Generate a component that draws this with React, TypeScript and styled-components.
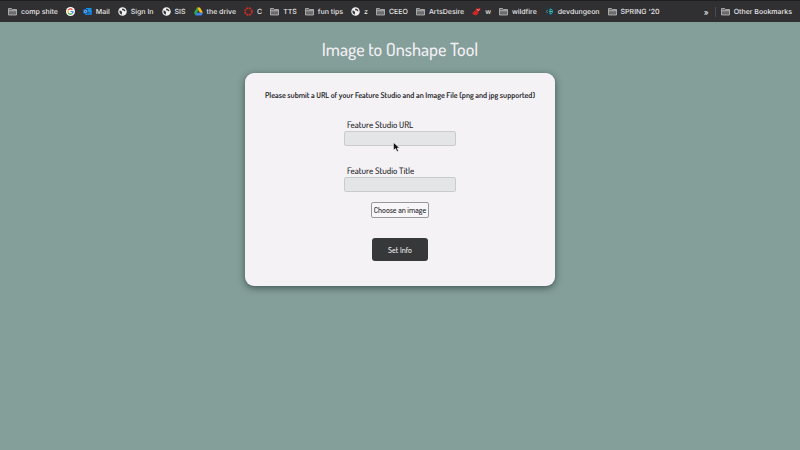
import React from "react";
import styled, { createGlobalStyle } from "styled-components";

const GlobalStyle = createGlobalStyle`
  *, *::before, *::after { box-sizing: border-box; }
  body {
    margin: 0;
    background: #849e99;
    font-family: Dosis, "Liberation Sans Narrow", "Open Sans", sans-serif;
    font-weight: 500;
    text-rendering: geometricPrecision;
    color: #222225;
  }
`;

const BookmarksBar = styled.nav`
  display: flex;
  align-items: center;
  height: 22px;
  padding: 0 8px;
  background: #302f31;
  border-top: 1px solid #1f1e20;
  font-family: Inter, sans-serif;
  font-size: 7px;
  font-weight: 500;
  line-height: 10px;
  color: #e6e6e7;
  white-space: nowrap;
`;

const BookmarkList = styled.div`
  display: flex;
  flex: 1;
  gap: 8px;
  min-width: 0;
  overflow: hidden;
`;

const Bookmark = styled.a`
  display: flex;
  flex: none;
  align-items: center;
  gap: 4px;
  color: inherit;
  text-decoration: none;
`;

const Overflow = styled.button`
  padding: 0 6px 0 0;
  border: 0;
  background: none;
  color: inherit;
  font: inherit;
  font-size: 8px;
  line-height: 10px;
`;

const OtherBookmarks = styled.div`
  padding-left: 5px;
  border-left: 1px solid #4b4a4d;
`;

const Icon = styled.svg`
  display: block;
  flex: none;
  width: 9px;
  height: 9px;
`;

const Page = styled.main`
  display: flex;
  flex-direction: column;
  align-items: center;
  padding: 16px 16px 40px;
`;

const Title = styled.h1`
  margin: 0 0 11px;
  font-size: 18px;
  font-weight: 500;
  line-height: 24px;
  color: #f3f0f5;
`;

const Card = styled.form`
  display: flex;
  flex-direction: column;
  align-items: center;
  width: 100%;
  max-width: 310px;
  padding: 15px 16px 25px;
  border-radius: 9px;
  background: #f5f2f6;
  box-shadow: 0 2px 7px rgba(20, 40, 40, 0.6);
`;

const Intro = styled.p`
  margin: 0 0 18px;
  font-size: 8px;
  font-weight: 600;
  line-height: 14px;
  white-space: nowrap;
`;

const Field = styled.div`
  position: relative;
  display: flex;
  flex-direction: column;
  width: 112px;
  margin-bottom: 20px;
`;

const Label = styled.label`
  padding-left: 3px;
  font-size: 9px;
  line-height: 11px;
`;

const TextInput = styled.input`
  width: 100%;
  height: 15px;
  padding: 0 3px;
  border: 1px solid #cacbce;
  border-radius: 2px;
  background: #e4e5e7;
  font: inherit;
  font-size: 9px;
  outline: none;
`;

const ChooseButton = styled.button`
  height: 16px;
  margin-top: -10px;
  padding: 0 2px;
  border: 1px solid #99979c;
  border-radius: 2px;
  background: #f8f6f9;
  color: inherit;
  font: inherit;
  font-size: 8px;
`;

const SubmitButton = styled.button`
  width: 56px;
  height: 23px;
  margin-top: 20px;
  padding: 0;
  border: 0;
  border-radius: 3px;
  background: #37383a;
  color: #eeeeef;
  font: inherit;
  font-size: 8px;
`;

const Pointer = styled.svg`
  position: absolute;
  left: 49px;
  top: 22px;
  width: 7px;
  height: 10px;
  pointer-events: none;
`;

const FolderIcon = () => (
  <Icon viewBox="0 0 18 18" aria-hidden="true">
    <path d="M1 16V3h6l2 2h8v11z" fill="#6b6a6c" stroke="#c4c4c5" strokeWidth="1.5" strokeLinejoin="round" />
    <path d="M1 7.5h16" stroke="#c4c4c5" strokeWidth="1.5" />
  </Icon>
);

const GlobeIcon = () => (
  <Icon viewBox="0 0 18 18" aria-hidden="true">
    <circle cx="9" cy="9" r="8.5" fill="#efeff0" />
    <path d="M3 7c2 0 4 1 5 3s-1 2 0 5C5 15 2 12 3 7zM9 3c3 0 5 2 6 5-2 1-3 0-4-1s-3 0-3-2z" fill="#3b3a3c" />
  </Icon>
);

const GoogleIcon = () => (
  <Icon viewBox="0 0 18 18" aria-hidden="true">
    <circle cx="9" cy="9" r="9" fill="#fff" />
    <g fill="none" strokeWidth="2.4">
      <path d="M4.5 6.5A5 5 0 0 1 12.7 5.5" stroke="#ea4335" />
      <path d="M4.5 6.5a5 5 0 0 0 0 5" stroke="#fbbc05" />
      <path d="M4.5 11.5a5 5 0 0 0 8 1.3" stroke="#34a853" />
      <path d="M12.5 12.8A5 5 0 0 0 14 9H9" stroke="#4285f4" />
    </g>
  </Icon>
);

const MailIcon = () => (
  <Icon viewBox="0 0 18 18" aria-hidden="true">
    <path d="M6 2h11v8H6z" fill="#1490df" />
    <path d="M5 8l6 4 7-4v8H5z" fill="#28a8ea" />
    <path d="M5 16l13-7v7z" fill="#1672c4" />
    <rect y="4" width="10" height="10" rx="1" fill="#0f59a8" />
    <circle cx="5" cy="9" r="2.5" fill="none" stroke="#d9eaff" strokeWidth="1.3" />
  </Icon>
);

const DriveIcon = () => (
  <Icon viewBox="0 0 18 18" aria-hidden="true">
    <path d="M6 1L0 11.5 3 17 9 6.5z" fill="#2da94f" />
    <path d="M6 1h6l6 10.5h-6z" fill="#fbc116" />
    <path d="M6 11.5h12L15 17H3z" fill="#3d82ee" />
  </Icon>
);

const CanvasIcon = () => (
  <Icon viewBox="0 0 18 18" aria-hidden="true">
    <circle cx="9" cy="9" r="7" fill="none" stroke="#c32e2b" strokeWidth="3.5" strokeDasharray="4.2 1.3" />
    <circle cx="9" cy="9" r="3.5" fill="none" stroke="#a82d2b" strokeWidth="1" strokeDasharray="1 1.75" />
  </Icon>
);

const BirdIcon = () => (
  <Icon viewBox="0 0 18 18" aria-hidden="true">
    <path d="M1 11l6-4 1-5 3 2 5-3 1 5-4 3-1 5-4 3-4-1-3-2z" fill="#c92829" />
    <path d="M10 4l2 3 3-2" fill="none" stroke="#f2b3b1" strokeWidth="1.5" />
  </Icon>
);

const DungeonIcon = () => (
  <Icon viewBox="0 0 18 18" aria-hidden="true">
    <rect width="18" height="18" fill="#28333a" />
    <path d="M6 6L2 9l4 3" fill="none" stroke="#78868c" strokeWidth="1.5" />
    <path d="M10 4v10c3 0 5-2 5-5s-2-5-5-5z" fill="none" stroke="#22b8c8" strokeWidth="2" />
    <path d="M9 9h5" stroke="#54c77c" strokeWidth="2" />
  </Icon>
);

const bookmarks: { label?: string; name?: string; icon: React.ComponentType }[] = [
  { label: "comp shite", icon: FolderIcon },
  { name: "Google", icon: GoogleIcon },
  { label: "Mail", icon: MailIcon },
  { label: "Sign In", icon: GlobeIcon },
  { label: "SIS", icon: GlobeIcon },
  { label: "the drive", icon: DriveIcon },
  { label: "C", icon: CanvasIcon },
  { label: "TTS", icon: FolderIcon },
  { label: "fun tips", icon: FolderIcon },
  { label: "z", icon: GlobeIcon },
  { label: "CEEO", icon: FolderIcon },
  { label: "ArtsDesire", icon: FolderIcon },
  { label: "w", icon: BirdIcon },
  { label: "wildfire", icon: FolderIcon },
  { label: "devdungeon", icon: DungeonIcon },
  { label: "SPRING '20", icon: FolderIcon },
];

export default function App() {
  return (
    <>
      <GlobalStyle />
      <BookmarksBar aria-label="Bookmarks">
        <BookmarkList>
          {bookmarks.map(({ label, name, icon: Glyph }) => (
            <Bookmark key={label ?? name} href="#" aria-label={name}>
              <Glyph />
              {label && <span>{label}</span>}
            </Bookmark>
          ))}
        </BookmarkList>
        <Overflow type="button" aria-label="More bookmarks">»</Overflow>
        <OtherBookmarks>
          <Bookmark href="#">
            <FolderIcon />
            <span>Other Bookmarks</span>
          </Bookmark>
        </OtherBookmarks>
      </BookmarksBar>
      <Page>
        <Title>Image to Onshape Tool</Title>
        <Card onSubmit={(event) => event.preventDefault()}>
          <Intro>Please submit a URL of your Feature Studio and an Image File (png and jpg supported)</Intro>
          <Field>
            <Label htmlFor="studio-url">Feature Studio URL</Label>
            <TextInput id="studio-url" type="text" />
            <Pointer viewBox="0 0 14 20" aria-hidden="true">
              <path d="M1 1v15l4-3 3 6 3-1-3-6h5z" fill="#111" stroke="#fff" strokeWidth="1" />
            </Pointer>
          </Field>
          <Field>
            <Label htmlFor="studio-title">Feature Studio Title</Label>
            <TextInput id="studio-title" type="text" />
          </Field>
          <ChooseButton type="button">Choose an image</ChooseButton>
          <SubmitButton type="submit">Set Info</SubmitButton>
        </Card>
      </Page>
    </>
  );
}
